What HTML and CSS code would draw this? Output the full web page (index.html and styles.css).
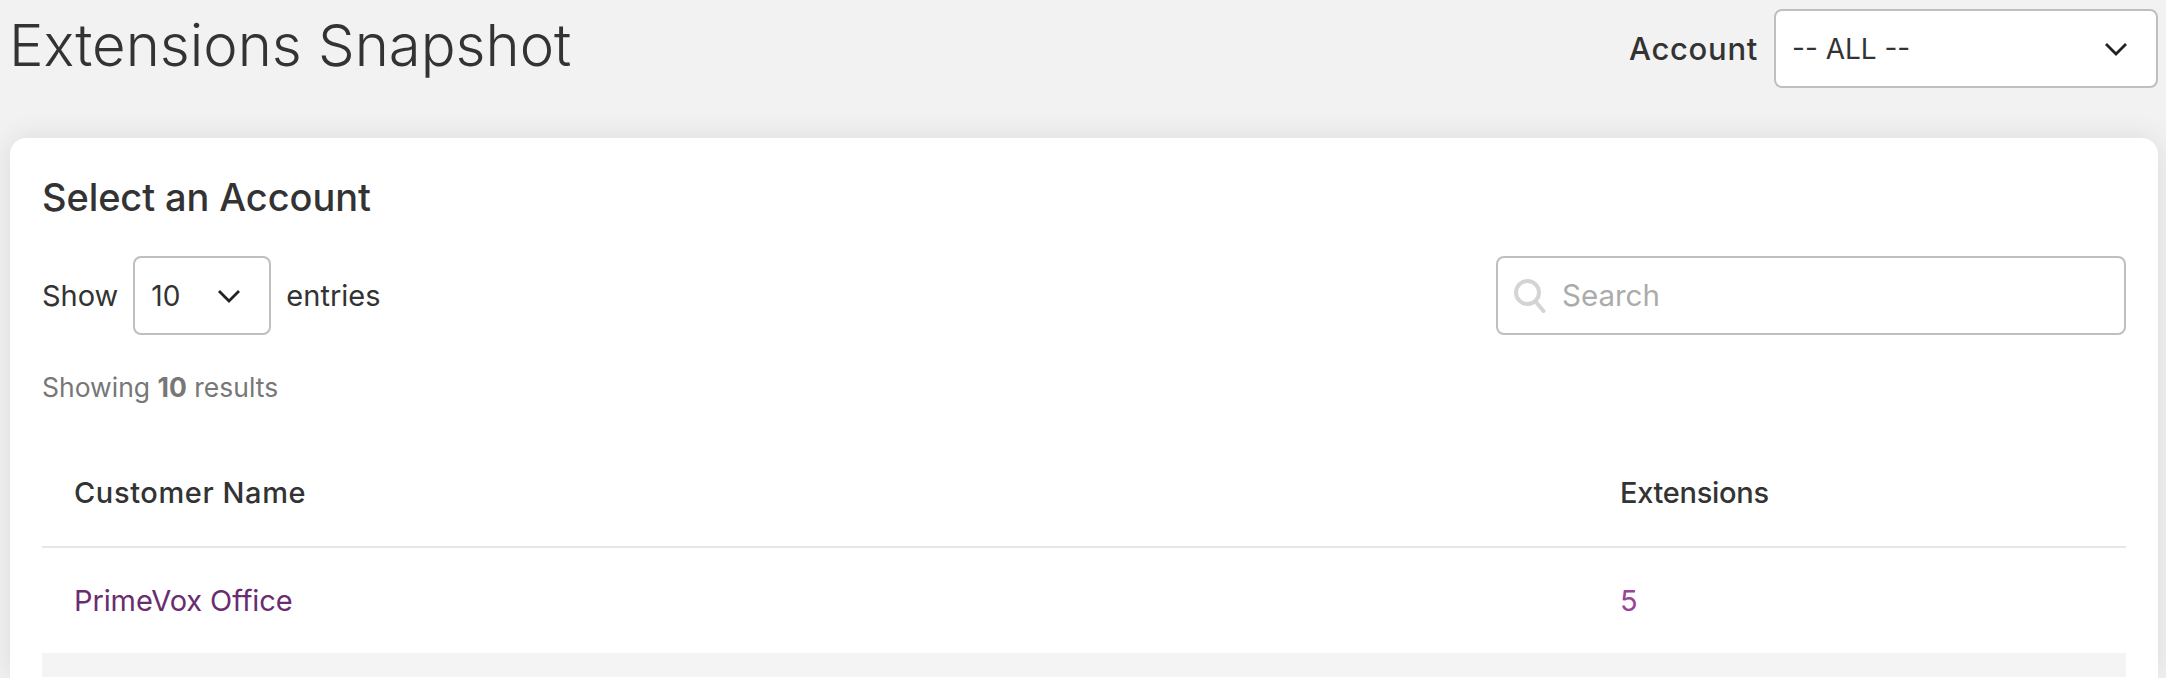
FILE: index.html
```html
<!DOCTYPE html>
<html lang="en">
    <head>
        <title>Extensions Snapshot</title>
        <meta charset="UTF-8">
        <link rel="stylesheet" href="styles.css">
    </head>
    <body>
        <div class="page-head">
            <h1 class="page-title">Extensions Snapshot</h1>
            <div class="account-filter">
                <span class="account-label">Account</span>
                <div class="select select-account">
                    <span>-- ALL --</span>
                    <svg class="chevron" viewBox="0 0 24 14"><path d="M2 2l10 10 10-10"/></svg>
                </div>
            </div>
        </div>
        <div class="card">
            <h2 class="card-title">Select an Account</h2>
            <div class="toolbar">
                <div class="length">
                    <span>Show</span>
                    <div class="select select-length">
                        <span>10</span>
                        <svg class="chevron" viewBox="0 0 24 14"><path d="M2 2l10 10 10-10"/></svg>
                    </div>
                    <span>entries</span>
                </div>
                <div class="search">
                    <svg class="search-icon" viewBox="0 0 32 34"><circle cx="13.500" cy="13.500" r="11.500"/><path d="M21.500 22.500l8 9.500"/></svg>
                    <input class="search-input" type="text" placeholder="Search">
                </div>
            </div>
            <div class="results">Showing <b>10</b> results</div>
            <table class="accounts">
                <thead>
                    <tr>
                        <th class="col-name">Customer Name</th>
                        <th class="col-count">Extensions</th>
                    </tr>
                </thead>
                <tbody>
                    <tr>
                        <td><a class="customer" href="#">PrimeVox Office</a></td>
                        <td><a class="count" href="#">5</a></td>
                    </tr>
                    <tr class="striped">
                        <td></td>
                        <td></td>
                    </tr>
                </tbody>
            </table>
        </div>
    </body>
</html>
```

FILE: styles.css
```css
* {
    box-sizing: border-box;
}

html, body {
    height: 100%;
}

body {
    display: flex;
    flex-direction: column;
    background-color: #F2F2F2;
    margin: 0;
    padding: 9px 8px 0 10px;
    font-family: 'Inter', sans-serif;
    font-size: 28px;
    color: #333333;
    overflow: hidden;
}

.page-head {
    display: flex;
    flex: none;
    justify-content: space-between;
    align-items: flex-start;
    height: 129px;
}

.page-title {
    margin: 3px 0 0 -1px;
    font-size: 58px;
    line-height: 66px;
    font-weight: 300;
}

.account-filter {
    display: flex;
    align-items: center;
    gap: 16px;
}

.account-label {
    font-weight: 500;
    font-size: 31px;
    letter-spacing: 0.7px;
}

.select {
    display: flex;
    align-items: center;
    justify-content: space-between;
    height: 79px;
    padding: 0 28px 0 16px;
    background-color: #FFFFFF;
    border: 2px solid #BFBFBF;
    border-radius: 8px;
    font-size: 28px;
}

.select-account {
    width: 384px;
}

.select-length {
    width: 138px;
}

.chevron {
    width: 24px;
    height: 14px;
    fill: none;
    stroke: #222222;
    stroke-width: 2.800;
}

.card {
    flex: 1;
    padding: 37px 32px 0 32px;
    background-color: #FFFFFF;
    border-radius: 16px 16px 0 0;
    box-shadow: 0 0 30px rgba(0, 0, 0, 0.1);
    overflow: hidden;
}

.card-title {
    margin: 0 0 37px 0;
    font-size: 38px;
    line-height: 44px;
    font-weight: 500;
    letter-spacing: -0.1px;
}

.toolbar {
    display: flex;
    justify-content: space-between;
    align-items: center;
}

.length {
    display: flex;
    align-items: center;
    gap: 15px;
    font-size: 29px;
}

.search {
    display: flex;
    align-items: center;
    gap: 16px;
    width: 630px;
    height: 79px;
    padding: 0 16px;
    border: 2px solid #BFBFBF;
    border-radius: 8px;
}

.search-icon {
    flex: none;
    width: 32px;
    height: 34px;
    fill: none;
    stroke: #D4D4D4;
    stroke-width: 4;
    stroke-linecap: round;
}

.search-input {
    flex: 1;
    min-width: 0;
    height: 38px;
    margin-bottom: 2px;
    border: 0;
    outline: 0;
    padding: 0;
    font-family: inherit;
    font-size: 29.500px;
    color: #333333;
}

.search-input::placeholder {
    color: #ABABAB;
    opacity: 1;
}

.results {
    margin-top: 33px;
    font-size: 26.500px;
    line-height: 38px;
    color: #777777;
}

.accounts {
    width: 100%;
    margin-top: 34px;
    border-collapse: collapse;
    table-layout: fixed;
}

.accounts th {
    height: 107px;
    padding: 0 32px 2px 32px;
    text-align: left;
    font-weight: 500;
    font-size: 29px;
    border-bottom: 2px solid #E6E6E6;
}

.accounts .col-name {
    width: 1546px;
    letter-spacing: 0.6px;
}

.accounts .col-count {
    letter-spacing: -0.3px;
}

.accounts td {
    height: 106px;
    padding: 0 32px;
    font-size: 29px;
}

.accounts .striped td {
    background-color: #F4F4F4;
    height: 24px;
}

.customer {
    color: #6A2C70;
    letter-spacing: -0.1px;
    text-decoration: none;
}

.count {
    color: #9A4498;
    text-decoration: none;
}
```
